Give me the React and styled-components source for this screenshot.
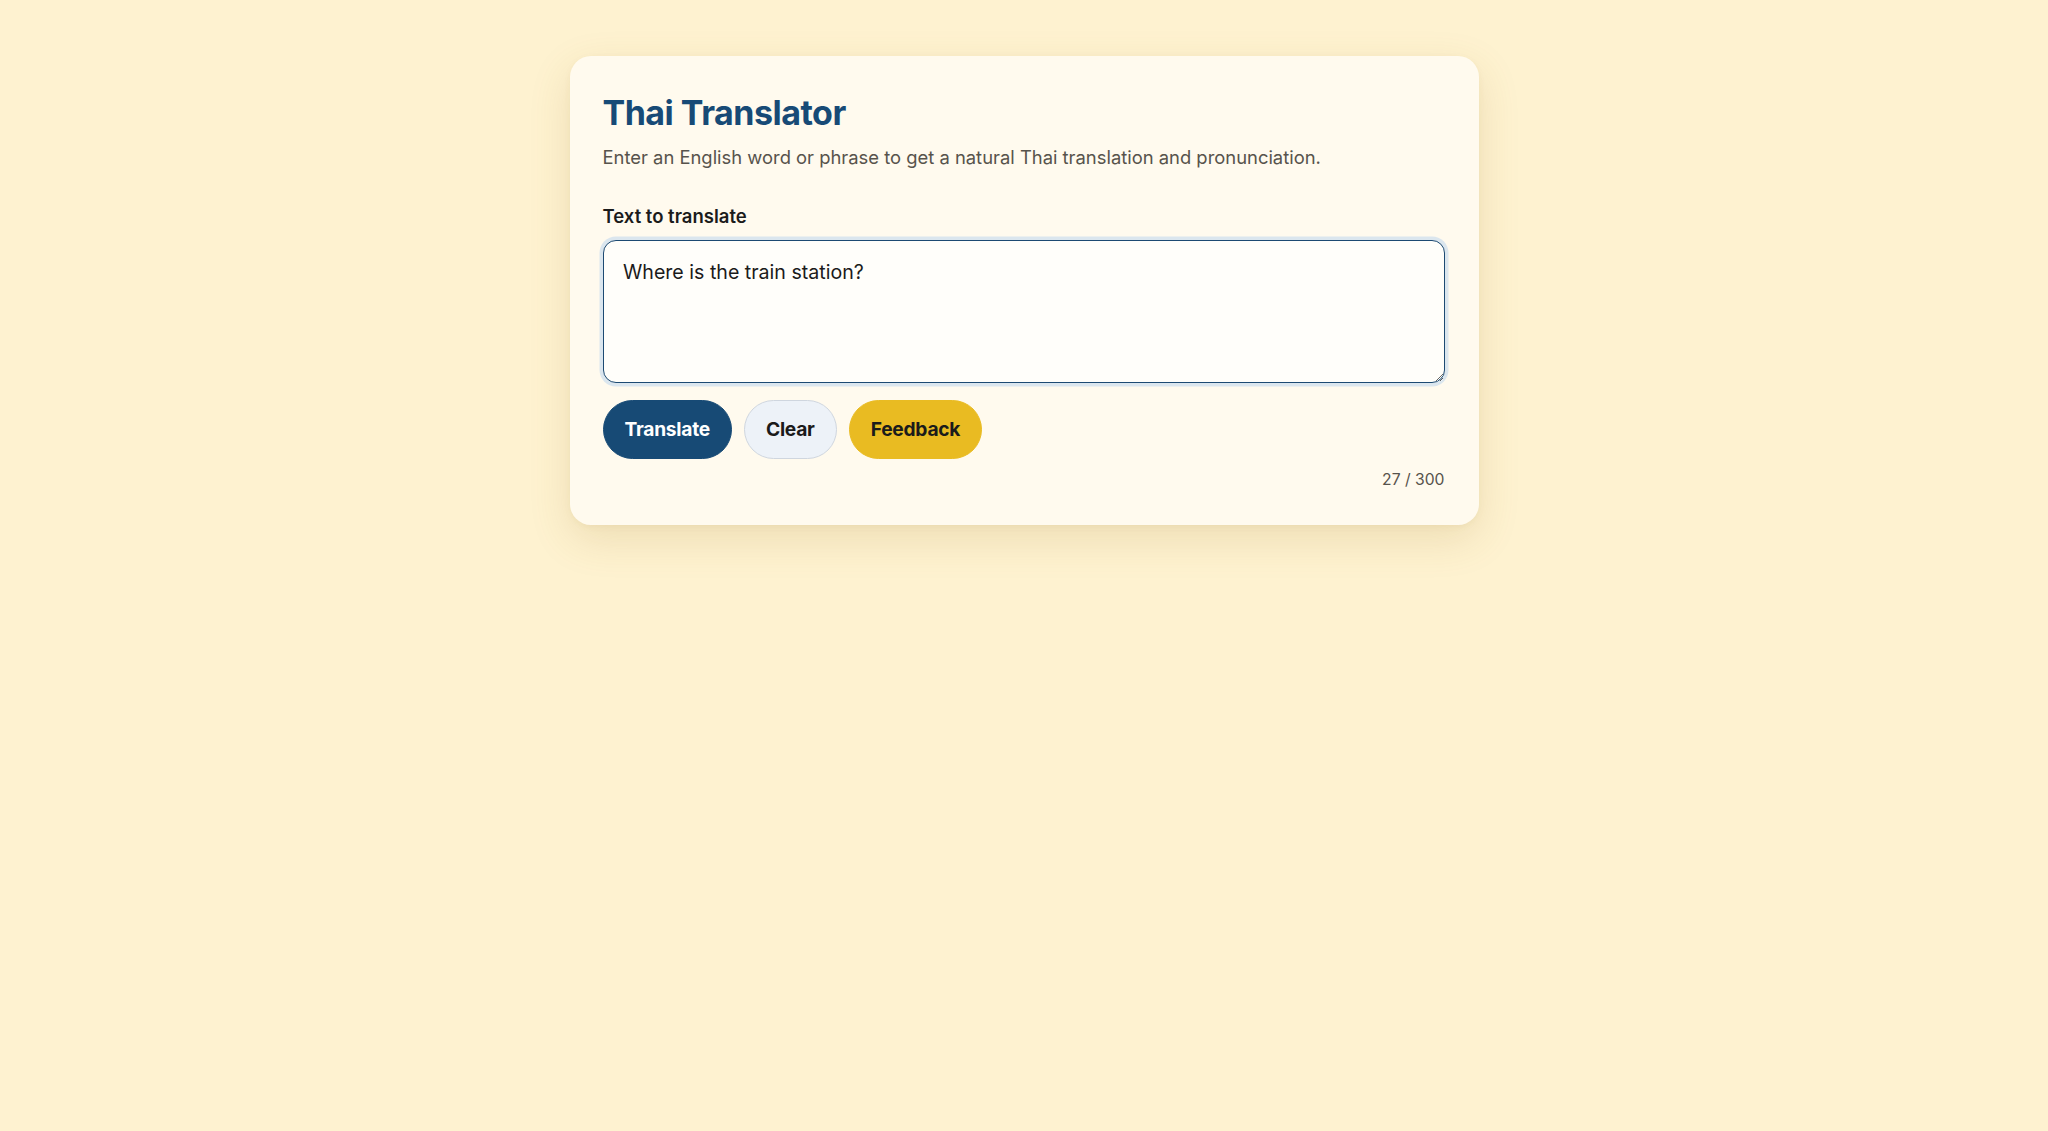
import React, { useEffect, useRef, useState } from "react";
import styled, { createGlobalStyle } from "styled-components";

const GlobalStyle = createGlobalStyle`
  html, body {
    margin: 0;
    padding: 0;
    background: #fef2d0;
    font-family: Inter, "Noto Sans", "Liberation Sans", sans-serif;
    -webkit-font-smoothing: antialiased;
  }
  #root {
    min-height: 100vh;
  }
`;

const Page = styled.div`
  min-height: 100vh;
  display: flex;
  justify-content: center;
  align-items: flex-start;
  padding-top: 56px;
  box-sizing: border-box;
`;

const Card = styled.main`
  width: 909px;
  box-sizing: border-box;
  background: #fffaee;
  border-radius: 21px;
  padding: 36px 34px 36px 33px;
  box-shadow: 0 14px 42px rgba(150, 115, 30, 0.16), 0 2px 6px rgba(150, 115, 30, 0.06);
  display: flex;
  flex-direction: column;
`;

const Title = styled.h1`
  margin: 0;
  font-size: 34px;
  font-weight: 700;
  letter-spacing: -0.5px;
  line-height: 41px;
  color: #174a76;
`;

const Subtitle = styled.p`
  margin: 11px 0 0;
  font-size: 18.4px;
  line-height: 27.5px;
  color: #57534c;
`;

const Label = styled.label`
  margin-top: 33px;
  font-size: 18.5px;
  font-weight: 600;
  line-height: 22px;
  color: #1b1b1b;
`;

const TextArea = styled.textarea`
  margin-top: 13px;
  width: 100%;
  height: 143px;
  box-sizing: border-box;
  border: 1.5px solid #1d4a72;
  border-radius: 13px;
  padding: 19px 19.5px 15px;
  font-family: Inter, "Noto Sans", "Liberation Sans", sans-serif;
  font-size: 19.6px;
  line-height: 24px;
  color: #1b1b1b;
  background: #fffefa;
  box-shadow: 0 0 0 3.5px #dbe6ee;
  outline: none;
  resize: vertical;
  caret-color: #1b1b1b;
`;

const ButtonRow = styled.div`
  margin-top: 17px;
  display: flex;
  gap: 12px;
`;

const VARIANTS = {
  primary: { bg: "#174a75", color: "#ffffff", border: "#174a75" },
  secondary: { bg: "#edf2f8", color: "#1b1b1b", border: "#cfd6df" },
  accent: { bg: "#e9bb22", color: "#1b1b1b", border: "#e9bb22" },
};

const Button = styled.button`
  height: 59px;
  padding: 0 21px;
  border-radius: 30px;
  border: 1px solid ${(p) => VARIANTS[p.$variant].border};
  background: ${(p) => VARIANTS[p.$variant].bg};
  color: ${(p) => VARIANTS[p.$variant].color};
  font-family: Inter, "Noto Sans", "Liberation Sans", sans-serif;
  font-size: 19.2px;
  font-weight: 700;
  letter-spacing: -0.25px;
  cursor: pointer;
`;

const Counter = styled.div`
  margin-top: 11px;
  align-self: flex-end;
  font-size: 15.7px;
  line-height: 19px;
  color: #57534c;
`;

export default function App() {
  const [text, setText] = useState("Where is the train station?");
  const ref = useRef(null);

  useEffect(() => {
    const el = ref.current;
    if (el) {
      el.focus();
      el.setSelectionRange(el.value.length, el.value.length);
    }
  }, []);

  return (
    <>
      <GlobalStyle />
      <Page>
        <Card>
          <Title>Thai Translator</Title>
          <Subtitle>
            Enter an English word or phrase to get a natural Thai translation and pronunciation.
          </Subtitle>
          <Label htmlFor="src">Text to translate</Label>
          <TextArea
            id="src"
            ref={ref}
            value={text}
            maxLength={300}
            onChange={(e) => setText(e.target.value)}
          />
          <ButtonRow>
            <Button $variant="primary">Translate</Button>
            <Button $variant="secondary" onClick={() => setText("")}>Clear</Button>
            <Button $variant="accent">Feedback</Button>
          </ButtonRow>
          <Counter>{text.length} / 300</Counter>
        </Card>
      </Page>
    </>
  );
}
